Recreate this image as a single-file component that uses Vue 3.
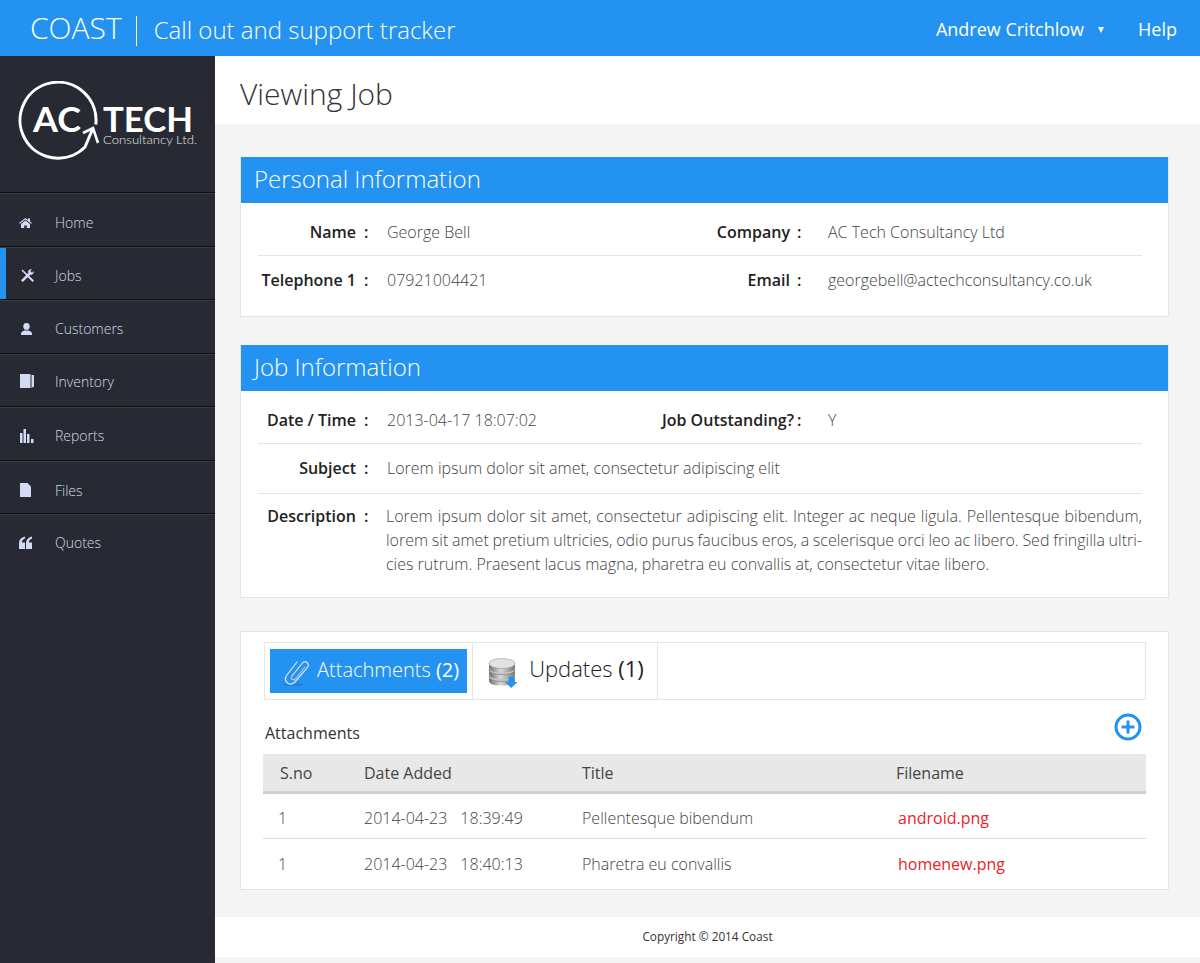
<script setup>
const nav = [
  { label: 'Home', icon: 'home' },
  { label: 'Jobs', icon: 'tools', active: true },
  { label: 'Customers', icon: 'user' },
  { label: 'Inventory', icon: 'book' },
  { label: 'Reports', icon: 'bars' },
  { label: 'Files', icon: 'file' },
  { label: 'Quotes', icon: 'quote' }
]
const rows = [
  { no: 1, date: '2014-04-23', time: '18:39:49', title: 'Pellentesque bibendum', file: 'android.png' },
  { no: 1, date: '2014-04-23', time: '18:40:13', title: 'Pharetra eu convallis', file: 'homenew.png' }
]
</script>

<template>
  <div class="page">
    <header class="topbar">
      <div class="brand">
        <span class="brand-name">COAST</span>
        <span class="brand-sep"></span>
        <span class="brand-sub">Call out and support tracker</span>
      </div>
      <nav class="topnav">
        <span class="user">Andrew Critchlow<i class="caret"></i></span>
        <span class="help">Help</span>
      </nav>
    </header>

    <div class="body">
      <aside class="sidebar">
        <div class="logo">
          <svg width="185" height="80" viewBox="0 0 185 80">
            <path d="M77.8 43.5 A38 38 0 1 0 67 66 L75 47" fill="none" stroke="#fff" stroke-width="3" />
            <path d="M65 52 L75 47 L80 62" fill="none" stroke="#fff" stroke-width="2.6" />
            <text x="15" y="51" class="logo-ac" textLength="48" lengthAdjust="spacingAndGlyphs">AC</text>
            <text x="85" y="51" class="logo-tech" textLength="90" lengthAdjust="spacingAndGlyphs">TECH</text>
            <text x="85" y="62.5" class="logo-sub" textLength="94" lengthAdjust="spacingAndGlyphs">Consultancy Ltd.</text>
          </svg>
        </div>
        <ul class="menu">
          <li v-for="item in nav" :key="item.label" class="menu-item" :class="{ active: item.active }">
            <svg class="menu-icon" width="16" height="16" viewBox="0 0 16 16">
              <path v-if="item.icon === 'home'" d="M0 8 L6.5 3 L9 5 V3.5 H11 V6.5 L13 8 L12.2 8.8 L6.5 4.5 L.8 8.8 Z M2 9 L6.5 5.5 L11 9 V13 H7.8 V10.5 H5.2 V13 H2 Z" />
              <path v-else-if="item.icon === 'tools'" d="M2.5 3.5 L3.5 2.5 L15 13.5 L13.5 15 Z M2 13.2 L9.8 5.6 L11.6 7.4 L3.8 15 Z M9 5 Q9.5 2 13 2 L11.3 4 L13 5.7 L15 4 Q15 7.5 11.5 8 Z" />
              <path v-else-if="item.icon === 'user'" d="M7.5 2 A3.2 3.4 0 1 1 7.5 8.8 A3.2 3.4 0 1 1 7.5 2 Z M2 14 V12.6 Q2.2 10.5 5.2 9.6 H9.8 Q12.8 10.5 13 12.6 V14 Z" />
              <path v-else-if="item.icon === 'book'" d="M1 1 H11.5 V15 H1 Z M12.5 2 H15 V13.5 L12.5 15 Z" />
              <path v-else-if="item.icon === 'bars'" d="M1 5 H3.5 V15 H1 Z M4.5 1 H7 V15 H4.5 Z M8 6 H10.5 V15 H8 Z M12 11 H14.5 V15 H12 Z" />
              <path v-else-if="item.icon === 'file'" d="M1 1 H8.5 L12 4.5 V15 H1 Z" />
              <path v-else d="M6 1.5 V3.5 Q3 4.5 2.8 7.5 H6 V14 H0 V8 Q0 3 6 1.5 Z M13 1.5 V3.5 Q10 4.5 9.8 7.5 H13 V14 H7 V8 Q7 3 13 1.5 Z" />
            </svg>
            <span>{{ item.label }}</span>
          </li>
        </ul>
      </aside>

      <main class="main">
        <div class="title-bar"><h1>Viewing Job</h1></div>

        <div class="content">
          <section class="panel personal">
            <h2 class="panel-head">Personal Information</h2>
            <div class="panel-body">
              <div class="row">
                <b class="lbl">Name</b><b class="colon">:</b><span class="val">George Bell</span>
                <b class="lbl">Company</b><b class="colon colon2">:</b><span class="val">AC Tech Consultancy Ltd</span>
              </div>
              <div class="row last">
                <b class="lbl">Telephone 1</b><b class="colon">:</b><span class="val">07921004421</span>
                <b class="lbl">Email</b><b class="colon colon2">:</b><span class="val">georgebell@actechconsultancy.co.uk</span>
              </div>
            </div>
          </section>

          <section class="panel job">
            <h2 class="panel-head">Job Information</h2>
            <div class="panel-body">
              <div class="row">
                <b class="lbl">Date / Time</b><b class="colon">:</b><span class="val">2013-04-17 18:07:02</span>
                <b class="lbl lbl-long">Job Outstanding?</b><b class="colon colon2">:</b><span class="val">Y</span>
              </div>
              <div class="row wide subject">
                <b class="lbl">Subject</b><b class="colon">:</b><span class="val">Lorem ipsum dolor sit amet, consectetur adipiscing elit</span>
              </div>
              <div class="row wide last desc">
                <b class="lbl">Description</b><b class="colon">:</b>
                <div class="val desc-text">
                  <span class="fill">Lorem ipsum dolor sit amet, consectetur adipiscing elit. Integer ac neque ligula. Pellentesque bibendum,</span>
                  <span class="fill tight">lorem sit amet pretium ultricies, odio purus faucibus eros, a scelerisque orci leo ac libero. Sed fringilla ultri-</span>
                  <span>cies rutrum. Praesent lacus magna, pharetra eu convallis at, consectetur vitae libero.</span>
                </div>
              </div>
            </div>
          </section>

          <section class="panel files">
            <div class="tabs">
              <div class="tab">
                <div class="tab-inner selected">
                  <svg width="30" height="30" viewBox="0 0 30 30" class="clip">
                    <ellipse cx="11" cy="27.5" rx="10" ry="1" fill="#1c6fb8" opacity=".6" />
                    <path d="M10 19 L20 6.5 Q22.5 3.5 25 5.5 Q27.5 7.5 25.5 10.5 L12.5 25.5 Q9 28.5 5.5 26 Q2 23 4.5 18.5 L15 5" fill="none" stroke="#dfe6ee" stroke-width="1.2" stroke-linecap="round" />
                    <path d="M10 19 Q8.5 21.5 10 22.5 Q11.5 23.5 13.5 21.5 L23 10" fill="none" stroke="#b8c6d4" stroke-width="1.1" stroke-linecap="round" />
                  </svg>
                  <span class="tab-text">Attachments <strong>(2)</strong></span>
                </div>
              </div>
              <div class="tab">
                <div class="tab-inner second">
                  <svg width="32" height="32" viewBox="0 0 32 32" class="db">
                    <defs>
                      <linearGradient id="dbg" x1="0" x2="1" y1="0" y2="0">
                        <stop offset="0" stop-color="#6e6e6e" />
                        <stop offset=".45" stop-color="#d8d8d8" />
                        <stop offset="1" stop-color="#777" />
                      </linearGradient>
                    </defs>
                    <path d="M2 21 V25 Q2 29.5 15 29.5 Q28 29.5 28 25 V21 Z" fill="url(#dbg)" />
                    <ellipse cx="15" cy="21" rx="13" ry="4.5" fill="#c4c4c4" stroke="#777" stroke-width=".6" />
                    <path d="M2 14 V18.5 Q2 23 15 23 Q28 23 28 18.5 V14 Z" fill="url(#dbg)" />
                    <ellipse cx="15" cy="14" rx="13" ry="4.5" fill="#c8c8c8" stroke="#777" stroke-width=".6" />
                    <path d="M2 7.5 V12 Q2 16.5 15 16.5 Q28 16.5 28 12 V7.5 Z" fill="url(#dbg)" />
                    <ellipse cx="15" cy="7.5" rx="13" ry="5" fill="#e2e2e2" stroke="#999" stroke-width=".6" />
                    <path d="M21.5 21 H27 V26 H30.5 L24.2 32 L18 26 H21.5 Z" fill="#2492f0" />
                  </svg>
                  <span class="tab-text">Updates <strong>(1)</strong></span>
                </div>
              </div>
            </div>

            <div class="files-title">
              <span>Attachments</span>
              <svg width="28" height="28" viewBox="0 0 28 28">
                <circle cx="14" cy="14" r="12" fill="none" stroke="#2492f0" stroke-width="3" />
                <path d="M14 7.5 V20.5 M7.5 14 H20.5" stroke="#2492f0" stroke-width="3" />
              </svg>
            </div>

            <table class="table">
              <colgroup>
                <col class="c1" /><col class="c2" /><col class="c3" /><col />
              </colgroup>
              <thead>
                <tr><th>S.no</th><th>Date Added</th><th>Title</th><th>Filename</th></tr>
              </thead>
              <tbody>
                <tr v-for="r in rows" :key="r.time">
                  <td>{{ r.no }}</td>
                  <td>{{ r.date }}<span class="time">{{ r.time }}</span></td>
                  <td>{{ r.title }}</td>
                  <td class="file">{{ r.file }}</td>
                </tr>
              </tbody>
            </table>
          </section>
        </div>

        <footer class="footer">Copyright © 2014 Coast</footer>
      </main>
    </div>
  </div>
</template>

<style>
html, body { margin: 0; background: #f4f4f4; }
</style>

<style scoped>
.page {
  height: 963px;
  overflow: hidden;
  display: flex;
  flex-direction: column;
  font-family: "Open Sans", "Liberation Sans", sans-serif;
  color: #555;
}
.topbar {
  height: 56px;
  flex: none;
  box-sizing: border-box;
  background: #2492f0;
  color: #fff;
  display: flex;
  align-items: center;
  justify-content: space-between;
  padding: 2px 23px 0 30px;
}
.brand { display: flex; align-items: center; }
.brand-name { font-size: 30px; font-weight: 300; line-height: 54px; margin-top: -2px; }
.brand-sep { width: 1px; height: 30px; background: #fff; margin: 4px 17px 0 14px; }
.brand-sub { font-size: 24px; font-weight: 300; }
.topnav { display: flex; align-items: center; font-size: 18px; font-weight: 400; }
.user { display: flex; align-items: center; margin-right: 34px; }
.caret {
  width: 0; height: 0;
  margin-left: 14px;
  margin-top: 2px;
  border-left: 3.5px solid transparent;
  border-right: 3.5px solid transparent;
  border-top: 6px solid #fff;
}
.body { flex: 1; display: flex; min-height: 0; }
.sidebar { width: 215px; flex: none; background: #272a33; }
.logo {
  height: 136px;
  box-sizing: border-box;
  padding: 25px 0 0 18px;
}
.logo svg { display: block; }
.logo-ac { font: 700 35px "Lato", sans-serif; fill: #fff; }
.logo-tech { font: 700 35px "Lato", sans-serif; fill: #fff; }
.logo-sub { font: 300 11.5px "Lato", sans-serif; fill: #e4e4e4; }
.menu { list-style: none; margin: 0; padding: 0; }
.menu-item {
  height: 53.5px;
  box-sizing: border-box;
  display: flex;
  align-items: center;
  gap: 20px;
  padding: 5px 0 0 19px;
  position: relative;
  font-size: 14px;
  font-weight: 300;
  color: #d5d9e8;
  border-top: 1px solid #0d0e11;
  box-shadow: inset 0 1px 0 #3a3d47;
}
.menu-item:nth-child(1) { padding-top: 7px; }
.menu-item:nth-child(4) { padding-top: 3px; }
.menu-item:nth-child(6) { padding-top: 7px; }
.menu-item.active::before {
  content: "";
  position: absolute;
  left: 0; top: 1px; bottom: 0;
  width: 6px;
  background: #2492f0;
}
.menu-icon {
  flex: none;
  fill: #d3daf3;
}
.main { flex: 1; min-width: 0; display: flex; flex-direction: column; }
.title-bar { height: 68px; flex: none; background: #fff; display: flex; align-items: center; padding: 6px 0 0 25px; box-sizing: border-box; }
h1 { margin: 0; font-size: 30px; font-weight: 300; color: #333; }
.content { flex: none; padding: 33px 31px 27px 25px; display: flex; flex-direction: column; }
.panel { background: #fff; border: 1px solid #e5e5e5; box-sizing: border-box; }
.personal { height: 160px; margin-bottom: 28px; }
.job { height: 253px; margin-bottom: 33px; }
.files { height: 259px; padding: 10px 22px 0 23px; }
.panel-head {
  margin: -1px 0 0;
  height: 46px;
  background: #2492f0;
  color: #fff;
  font-size: 24px;
  font-weight: 300;
  line-height: 43px;
  padding-left: 13px;
}
.panel-body { padding: 5px 26px 0 17px; }
.row {
  display: grid;
  grid-template-columns: 98px 31px 262px 141px 38px 1fr;
  font-size: 16px;
  line-height: 24px;
  padding: 12px 0 11px;
  border-bottom: 1px solid #e5e5e5;
  align-items: start;
}
.row.last { border-bottom: 0; }
.row.wide { grid-template-columns: 98px 31px 1fr; padding-top: 12px; padding-bottom: 12px; }
.row.subject { padding-bottom: 13px; }
.row.desc { padding-top: 10px; }
.lbl { font-weight: 600; color: #222; text-align: right; white-space: nowrap; justify-self: end; }
.lbl-long { margin-right: -4px; }
.colon { font-weight: 600; color: #222; padding-left: 8px; }
.colon2 { padding-left: 7px; }
.val { font-weight: 300; color: #444; }
.desc-text { margin-left: -1px; }
.desc-text span { display: block; white-space: nowrap; }
.desc-text .fill { white-space: normal; text-align: justify; text-align-last: justify; }
.desc-text .tight { word-spacing: -1px; }
.tabs { height: 58px; border: 1px solid #e5e5e5; box-sizing: border-box; display: flex; }
.tab {
  display: flex;
  align-items: center;
  padding: 0 5px;
  border-right: 1px solid #e5e5e5;
  height: 56px;
}
.tab-inner {
  height: 44px;
  display: flex;
  align-items: center;
  font-size: 20px;
  font-weight: 300;
  color: #333;
  box-sizing: border-box;
}
.tab-inner strong { font-weight: 400; }
.tab-inner.selected { background: #2492f0; color: #fff; padding: 0 8px 0 12px; }
.tab-inner.second { font-size: 22px; color: #222; padding: 0 8px 0 9px; }
.tab-text { margin-top: -4px; }
.second .tab-text { margin-top: -6px; }
.clip { margin-right: 5px; margin-top: 2px; }
.db { margin-right: 10px; margin-top: 2px; }
.files-title {
  height: 54px;
  display: flex;
  align-items: flex-start;
  justify-content: space-between;
  padding: 0 4px 0 1px;
  font-size: 16px;
  color: #333;
  box-sizing: border-box;
}
.files-title span { margin-top: 22px; line-height: 22px; font-weight: 400; }
.files-title svg { margin-top: 13px; }
.table {
  width: 883px;
  margin-left: -1px;
  border-collapse: separate;
  border-spacing: 0;
  table-layout: fixed;
  font-size: 16px;
}
.c1 { width: 101px; }
.c2 { width: 218px; }
.c3 { width: 314px; }
th {
  height: 40px;
  box-sizing: border-box;
  background: #e8e8e8;
  border-bottom: 3px solid #d0d0d0;
  text-align: left;
  font-weight: 400;
  color: #444;
  padding: 0 0 0 17px;
}
th + th, td + td { padding-left: 0; }
td {
  height: 46px;
  box-sizing: border-box;
  border-bottom: 1px solid #ddd;
  font-weight: 300;
  color: #444;
  padding: 3px 0 0 15px;
}
td + td { padding-top: 3px; }
tbody tr:first-child td { height: 45px; }
tbody tr:last-child td { border-bottom: 0; }
.time { margin-left: 13px; }
td.file { color: #e8232a; font-weight: 400; padding-left: 2px; }
.footer {
  height: 40px;
  flex: none;
  background: #fff;
  font-size: 11.8px;
  font-weight: 400;
  color: #333;
  text-align: center;
  line-height: 38px;
}
</style>
